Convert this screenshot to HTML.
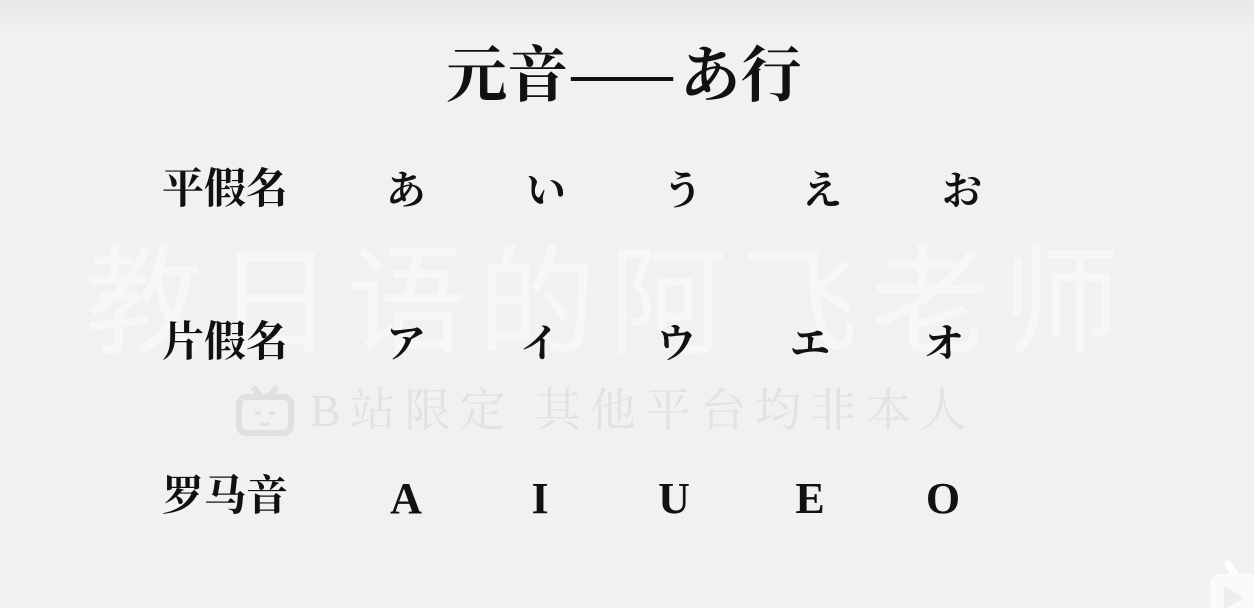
<!DOCTYPE html>
<html><head><meta charset="utf-8"><style>
body{margin:0;width:1254px;height:608px;background:#f1f1f1;overflow:hidden;position:relative;font-family:"Liberation Serif","Noto Serif CJK SC",serif;}
.t{position:absolute;font-weight:bold;color:#111;white-space:nowrap;line-height:1;}
.c{transform:translateX(-50%);}
.wm{position:absolute;white-space:nowrap;line-height:1;font-family:"Liberation Sans","Noto Sans CJK SC",sans-serif;}
</style></head><body>
<div style="position:absolute;left:0;top:0;width:1254px;height:30px;background:linear-gradient(#e8e8e8,#f1f1f1)"></div>
<div class="wm" style="left:85px;top:245px;font-size:118px;color:#f7f7f7;letter-spacing:13px">教日语的阿飞老师</div>
<svg style="position:absolute;left:235px;top:385px" width="60" height="52" viewBox="0 0 60 52"><g fill="none" stroke="#e0e0e0" stroke-width="6"><rect x="4" y="12" width="52" height="36" rx="7"/><path d="M18 2l8 9M42 2l-8 9"/></g><path d="M20 28h6M34 28h6M26 38q4 4 8 0" stroke="#e0e0e0" stroke-width="3" fill="none"/></svg>
<div class="wm" style="left:310px;top:388px;font-size:46px;color:#e2e2e2;letter-spacing:9px;font-family:'Liberation Serif','Noto Serif CJK SC',serif">B站限定 其他平台均非本人</div>
<div class="t c" style="left:624px;top:40px;font-size:61px">元音<span style="font-family:'Noto Serif CJK SC',serif;letter-spacing:4px">——</span>あ行</div>
<div class="t" style="left:162px;top:169px;font-size:42px">平假名</div>
<div class="t" style="left:162px;top:322px;font-size:42px">片假名</div>
<div class="t" style="left:162px;top:476px;font-size:42px">罗马音</div>
<div class="t c" style="left:406px;top:171px;font-size:40px">あ</div>
<div class="t c" style="left:546px;top:171px;font-size:40px">い</div>
<div class="t c" style="left:683px;top:171px;font-size:40px">う</div>
<div class="t c" style="left:822px;top:171px;font-size:40px">え</div>
<div class="t c" style="left:962px;top:171px;font-size:40px">お</div>
<div class="t c" style="left:406px;top:324px;font-size:40px">ア</div>
<div class="t c" style="left:540px;top:324px;font-size:40px">イ</div>
<div class="t c" style="left:676px;top:324px;font-size:40px">ウ</div>
<div class="t c" style="left:810px;top:324px;font-size:40px">エ</div>
<div class="t c" style="left:944px;top:324px;font-size:40px">オ</div>
<div class="t c" style="left:406px;top:477px;font-size:44px">A</div>
<div class="t c" style="left:540px;top:477px;font-size:44px">I</div>
<div class="t c" style="left:674px;top:477px;font-size:44px">U</div>
<div class="t c" style="left:810px;top:477px;font-size:44px">E</div>
<div class="t c" style="left:943px;top:477px;font-size:44px">O</div>
<svg style="position:absolute;left:1208px;top:560px" width="46" height="48" viewBox="0 0 46 48"><path d="M20 4l8 12" stroke="#fff" stroke-width="7" stroke-linecap="round"/><rect x="2" y="14" width="60" height="50" rx="10" fill="#fafafa"/><path d="M16 26l20 12-20 12z" fill="#eee"/></svg>
</body></html>
